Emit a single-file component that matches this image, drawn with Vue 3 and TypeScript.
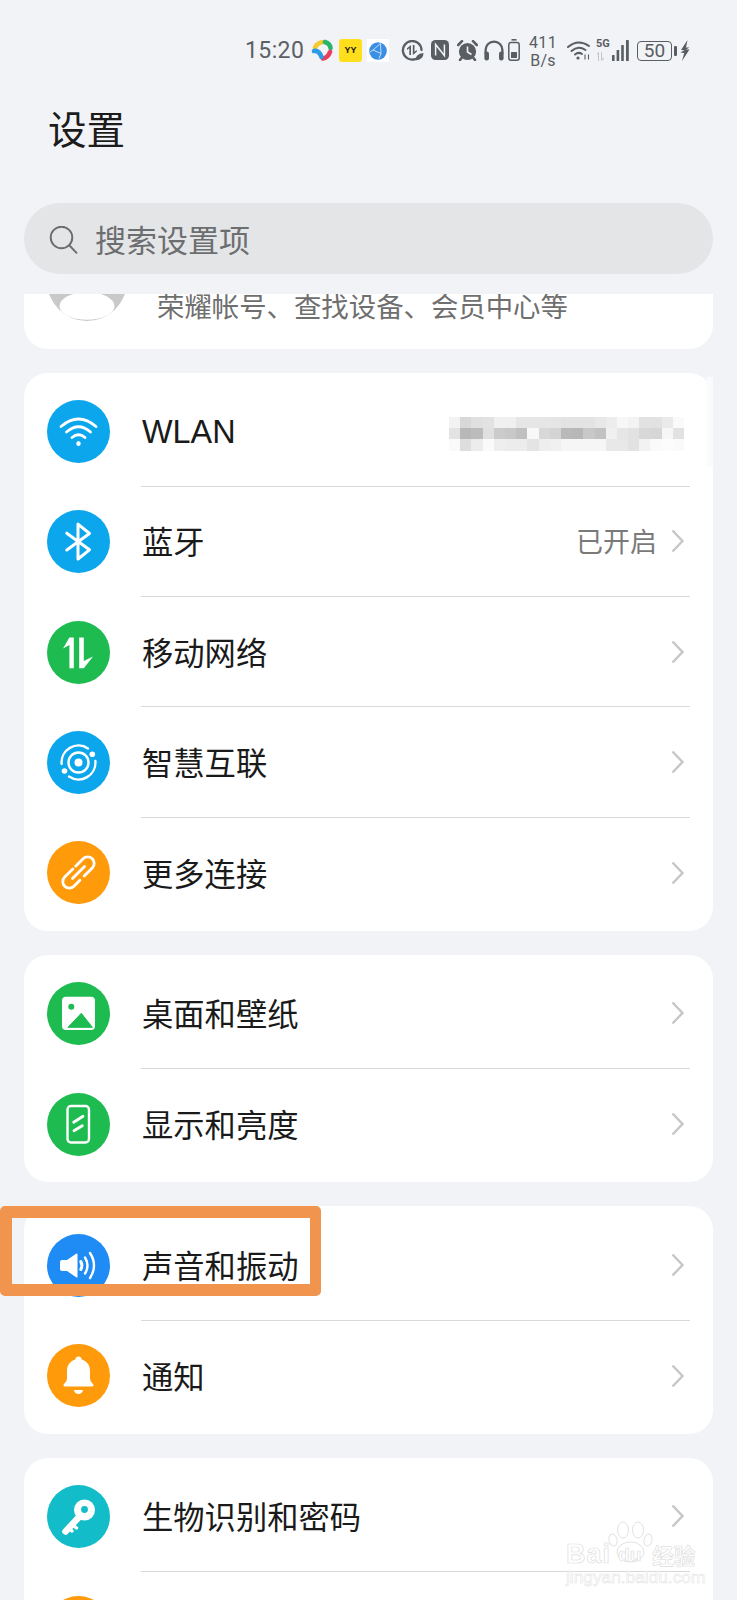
<script setup lang="ts">
interface Row {
  id: string
  label: string
  color: string
  value?: string
  latin?: boolean
  blur?: boolean
}

const groups: Row[][] = [
  [
    { id: 'wifi', label: 'WLAN', color: '#0ca6ec', latin: true, blur: true },
    { id: 'bt', label: '蓝牙', color: '#0ca6ec', value: '已开启' },
    { id: 'data', label: '移动网络', color: '#1dbb50' },
    { id: 'hi', label: '智慧互联', color: '#0ca6ec' },
    { id: 'link', label: '更多连接', color: '#ff9a0b' },
  ],
  [
    { id: 'image', label: '桌面和壁纸', color: '#1dbb50' },
    { id: 'display', label: '显示和亮度', color: '#1dbb50' },
  ],
  [
    { id: 'sound', label: '声音和振动', color: '#1f8cf5' },
    { id: 'bell', label: '通知', color: '#ff9a0b' },
  ],
  [
    { id: 'key', label: '生物识别和密码', color: '#12bcc8' },
    { id: 'more', label: '', color: '#ff9a0b' },
  ],
]

const blurCells: string[] = [
  'f2', 'd8', 'e0', 'e2', 'f0', 'f0', 'e6', 'e6', 'e6', 'e5', 'e3', 'e3', 'e3', 'e8', 'ed', 'f7', 'f3', 'e2', 'e2', 'ea', 'fa',
  'e3', 'b8', 'bc', 'e0', 'cb', 'c8', 'c0', 'f8', 'd8', 'd4', 'b9', 'b7', 'c8', 'c2', 'f0', 'e6', 'e2', 'd8', 'd6', 'f6', 'e2',
  'fa', 'de', 'ec', 'fa', 'ee', 'ec', 'ec', 'e4', 'ee', 'f0', 'f6', 'f6', 'f6', 'f6', 'e8', 'e8', 'e2', 'f2', 'fa', 'fc', 'fa',
].map((g) => `#${g}${g}${g}`)
</script>

<template>
  <div class="page">
    <div class="status">
      <span class="time">15:20</span>
      <svg class="s-app1" width="22" height="22" viewBox="0 0 22 22" fill="none" stroke-width="4.6" stroke-linecap="round">
        <path d="M4 8.5 Q7 3 13 3" stroke="#f6c92c" />
        <path d="M14 3 Q19 4.5 19.5 9" stroke="#27b56e" />
        <path d="M19 13 Q17 18.5 12 19.5" stroke="#ea3f5c" />
        <path d="M3 12 Q8 11 10.5 18" stroke="#2f9be8" />
      </svg>
      <span class="s-yy">YY</span>
      <span class="s-ball">
        <svg width="20" height="20" viewBox="0 0 20 20">
          <circle cx="10" cy="10" r="8.8" fill="#3a8ee4" />
          <path d="M12.5 2.5 L5 9 L13 12.5 L12.5 2.5 M13 12.5 L11 17.5 M5 9 L2 11" stroke="#d6e8fa" stroke-width="0.9" fill="none" />
        </svg>
      </span>
      <svg class="s-saver" width="23" height="21" viewBox="0 0 23 21" fill="none">
        <path d="M14 19.2 A9.3 9.3 0 1 1 20.5 10" stroke="#595e63" stroke-width="2.3" stroke-linecap="round" />
        <path d="M10 5 V15 H8.3 V8.3 L6 10 V8.2 Z M11.8 5 H13.5 V11.7 L15.8 10 V11.8 L11.8 15 Z" fill="#595e63" />
        <path d="M14.5 20.5 Q14 14 22.5 13 Q22.5 20 14.5 20.5 Z" fill="#595e63" />
      </svg>
      <svg class="s-nfc" width="18" height="20" viewBox="0 0 18 20">
        <rect x="0" y="0" width="18" height="20" rx="4.5" fill="#595e63" />
        <path d="M4.6 15.5 V4.5 L13.4 15.5 V4.5" fill="none" stroke="#f1f3f6" stroke-width="1.5" />
      </svg>
      <svg class="s-alarm" width="21" height="21" viewBox="0 0 21 21">
        <circle cx="10.5" cy="11.5" r="8.6" fill="#595e63" />
        <path d="M1.2 5 L5 1.2 M19.8 5 L16 1.2 M4.5 18 L3 20 M16.5 18 L18 20" stroke="#595e63" stroke-width="2.6" stroke-linecap="round" />
        <path d="M10.5 6.5 V12 L14.5 14.5" fill="none" stroke="#f1f3f6" stroke-width="1.6" />
      </svg>
      <svg class="s-head" width="20" height="21" viewBox="0 0 20 21" fill="none">
        <path d="M1.6 14 V10 a8.4 8.4 0 0 1 16.8 0 V14" stroke="#595e63" stroke-width="2.3" />
        <rect x="0.4" y="11.5" width="4.6" height="9" rx="2.2" fill="#595e63" />
        <rect x="15" y="11.5" width="4.6" height="9" rx="2.2" fill="#595e63" />
      </svg>
      <svg class="s-batt" width="12" height="22" viewBox="0 0 12 22" fill="none">
        <rect x="3.5" y="0" width="5" height="1.6" fill="#595e63" />
        <rect x="0.8" y="3.5" width="10.4" height="17.7" rx="2.2" stroke="#595e63" stroke-width="1.5" />
        <rect x="3" y="13" width="6" height="6" rx="0.6" fill="#595e63" />
      </svg>
      <div class="s-speed"><span>411</span><span>B/s</span></div>
      <svg class="s-wifi" width="24" height="20" viewBox="0 0 24 20" fill="none" stroke="#595e63" stroke-width="2" stroke-linecap="round">
        <path d="M1 7 Q11 -1.5 22 6" />
        <path d="M4.5 11 Q11 5 18.5 10" />
        <path d="M8 14.5 Q11.5 11.5 15 14" />
        <circle cx="11" cy="18" r="1.6" fill="#595e63" stroke="none" />
        <path d="M18 14.5 V19.5 M21.5 14.5 V19.5" stroke-width="1.1" stroke-linecap="butt" />
      </svg>
      <div class="s-sim">
        <span class="s-5g">5G</span>
        <svg width="11" height="9" viewBox="0 0 11 9" fill="#c3c6c9">
          <path d="M1 1.5 L3 0 V9 H2 V2 L1 3 Z M5 0 H6 V7 L8 5.5 V7 L5 9 Z" />
        </svg>
      </div>
      <svg class="s-bars" width="17" height="21" viewBox="0 0 17 21" fill="#595e63">
        <rect x="0" y="15" width="2.6" height="6" rx="0.6" />
        <rect x="4.6" y="10" width="2.6" height="11" rx="0.6" />
        <rect x="9.2" y="5" width="2.6" height="16" rx="0.6" />
        <rect x="14" y="0" width="2.8" height="21" rx="0.6" />
      </svg>
      <div class="s-battery">
        <div class="s-battery-body">50</div>
        <div class="s-battery-cap"></div>
      </div>
      <svg class="s-bolt" width="10" height="21" viewBox="0 0 10 21" fill="#595e63">
        <path d="M7.5 0 L1 10 H4.5 L0.5 12.5 L4.2 13 L2 21 L9.5 9.5 H6 L9.5 7.5 H6 Z" />
      </svg>
    </div>

    <h1 class="title">设置</h1>

    <div class="search">
      <svg class="search-icon" width="29" height="28" viewBox="0 0 29 28" fill="none" stroke="#6a6d70" stroke-width="1.9" stroke-linecap="round">
        <circle cx="12.5" cy="11.5" r="10.8" />
        <path d="M20.5 19.5 L27.5 26.8" />
      </svg>
      <span class="search-text">搜索设置项</span>
    </div>

    <div class="list">
      <section class="card profile">
        <svg class="avatar" width="80" height="80" viewBox="0 0 80 80">
          <circle cx="40" cy="40" r="40" fill="#c9c9c9" />
          <ellipse cx="40" cy="65" rx="27.5" ry="13.8" fill="#fff" />
        </svg>
        <span class="profile-text">荣耀帐号、查找设备、会员中心等</span>
      </section>

      <section v-for="(group, gi) in groups" :key="gi" class="card">
        <div v-for="(row, ri) in group" :key="row.id" class="row">
          <span v-if="row.id === 'wifi'" class="smudge"></span>
          <svg class="icon" width="63" height="63" viewBox="0 0 63 63" fill="none">
            <circle cx="31.5" cy="31.5" r="31.5" :fill="row.color" />
            <g v-if="row.id === 'wifi'" stroke="#fff" stroke-width="2.8" stroke-linecap="round">
              <path d="M14 26.5 Q31.5 11.5 49 26.5" />
              <path d="M19.5 32 Q31.5 21.5 43.5 32" />
              <path d="M25 37.5 Q31.5 32 38 37.5" />
              <ellipse cx="31.5" cy="43.5" rx="2.2" ry="2.6" fill="#fff" stroke="none" />
            </g>
            <path v-else-if="row.id === 'bt'" d="M19.8 40 L42.5 23.5 L31 14.2 V49 L42.5 39.8 L19.8 23.2" stroke="#fff" stroke-width="3" stroke-linejoin="round" stroke-linecap="round" />
            <g v-else-if="row.id === 'data'" fill="#fff">
              <path d="M22.4 16.5 H26.8 V47.3 H22.4 V24 L16 27.5 Z" />
              <path d="M32.2 16.5 H36.8 V40 L46 35.5 L36.8 47.3 H32.2 Z" />
            </g>
            <g v-else-if="row.id === 'hi'">
              <circle cx="31.5" cy="31.5" r="4" fill="#fff" />
              <circle cx="31.5" cy="31.5" r="10" stroke="#fff" stroke-width="2.4" />
              <path d="M14.6 33 A17 17 0 0 1 41 17.4 M48.4 30 A17 17 0 0 1 22 45.6" stroke="#fff" stroke-width="2.4" stroke-linecap="round" />
              <circle cx="45.3" cy="23.2" r="2.8" fill="#fff" />
              <circle cx="17.5" cy="40" r="2.8" fill="#fff" />
            </g>
            <g v-else-if="row.id === 'link'" transform="rotate(-45 31.5 31.5)" stroke="#fff" stroke-width="2.8" stroke-linecap="round">
              <path d="M30 25 H18.5 a6.5 6.5 0 0 0 0 13 H27" />
              <path d="M34 25 H44.5 a6.5 6.5 0 0 1 0 13 H33" />
              <path d="M23 31.5 H40" />
            </g>
            <g v-else-if="row.id === 'image'">
              <rect x="15" y="14.7" width="33" height="33.3" rx="4" fill="#fff" />
              <circle cx="24.3" cy="24.7" r="3" :fill="row.color" />
              <path d="M21 45.3 L34.3 31.3 L45.3 45.3 Z" :fill="row.color" stroke="#1dbb50" stroke-width="1" stroke-linejoin="round" />
            </g>
            <g v-else-if="row.id === 'display'" stroke="#fff" stroke-linecap="round">
              <rect x="20.5" y="13" width="21.5" height="36.5" rx="3.5" stroke-width="2.4" />
              <path d="M26.7 29.3 L36 23.3 M27 37.7 L35.3 32.7" stroke-width="2.8" />
            </g>
            <g v-else-if="row.id === 'sound'" stroke="#fff" stroke-linecap="round">
              <path d="M15 26 H20 L29.5 19.5 A1 1 0 0 1 30.5 20 V43 A1 1 0 0 1 29.5 43.5 L20 37 H15 A2 2 0 0 1 13 35 V28 A2 2 0 0 1 15 26 Z" fill="#fff" stroke="none" />
              <path d="M33.8 27.5 Q36 31.5 33.8 35.5" stroke-width="3" />
              <path d="M38 23.5 Q43 31.5 38 39.5" stroke-width="2.4" />
              <path d="M43 19 Q51 31.5 43 44" stroke-width="2.4" />
            </g>
            <g v-else-if="row.id === 'bell'" fill="#fff">
              <path d="M31.5 12.5 c-2 0 -3.2 1.4 -3.2 3 c-5.5 1.6 -8.3 6 -8.3 11.5 v7 c0 3 -1.4 4.5 -3 6 c-1 1 -.5 2.6 1 2.6 h27 c1.5 0 2 -1.6 1 -2.6 c-1.6 -1.5 -3 -3 -3 -6 v-7 c0 -5.5 -2.8 -9.9 -8.3 -11.5 c0 -1.6 -1.2 -3 -3.2 -3 z" />
              <path d="M27 46 h9 a4.5 4 0 0 1 -9 0 z" />
            </g>
            <g v-else-if="row.id === 'key'">
              <circle cx="37.5" cy="25" r="10.5" fill="#fff" />
              <circle cx="37.5" cy="24.5" r="3.4" :fill="row.color" />
              <path d="M33 31 L18.5 46.5" stroke="#fff" stroke-width="6.5" stroke-linecap="round" />
              <path d="M25 39.5 L29.5 43 M21.5 43 L25 46" stroke="#fff" stroke-width="3.4" stroke-linecap="round" />
            </g>
          </svg>
          <div class="body" :class="{ 'body-last': ri === group.length - 1 }">
            <span v-if="row.label" class="label" :class="{ latin: row.latin }">{{ row.label }}</span>
            <div class="trail">
              <div v-if="row.blur" class="blur">
                <i v-for="(c, i) in blurCells" :key="i" :style="{ background: c }"></i>
              </div>
              <template v-else>
                <span v-if="row.value" class="value">{{ row.value }}</span>
                <svg class="chevron" width="14" height="24" viewBox="0 0 14 24" fill="none">
                  <path d="M1.5 1.5 L11.5 12 L1.5 22.5" stroke="#c6c6c6" stroke-width="2.4" />
                </svg>
              </template>
            </div>
          </div>
        </div>
      </section>
    </div>

    <div class="highlight"></div>

    <div class="watermark">
      <svg class="wm-paw" width="52" height="42" viewBox="0 0 52 42" fill="#fff" stroke="#e2e2e2" stroke-width="1">
        <ellipse cx="18" cy="9" rx="5.5" ry="8" />
        <ellipse cx="33" cy="9" rx="5.5" ry="8" />
        <ellipse cx="8" cy="19" rx="4" ry="6" transform="rotate(-15 8 19)" />
        <ellipse cx="43" cy="19" rx="4" ry="6" transform="rotate(15 43 19)" />
        <ellipse cx="25.5" cy="31" rx="13.5" ry="10" />
      </svg>
      <div class="wm-line">
        <span class="wm-bai">Bai</span>
        <span class="wm-du">du</span>
        <span class="wm-cn">经验</span>
      </div>
      <div class="wm-url">jingyan.baidu.com</div>
    </div>
  </div>
</template>

<style scoped>
.page {
  position: relative;
  width: 737px;
  height: 1600px;
  overflow: hidden;
  background: #f1f3f6;
  font-family: "Noto Sans CJK SC", "Noto Sans", sans-serif;
  color: #1a1a1a;
}

/* status bar */
.status {
  height: 97px;
  box-sizing: border-box;
  padding: 39px 0 0 245px;
  display: flex;
  align-items: flex-start;
  font-family: Roboto, sans-serif;
  color: #595e63;
}
.time {
  font-size: 23px;
  line-height: 24px;
  letter-spacing: 0.4px;
  color: #5b6065;
  width: 59px;
}
.s-app1 { margin: 0 0 0 7px; }
.s-yy {
  margin-left: 6px;
  width: 23px;
  height: 23px;
  border-radius: 3px;
  background: #ffdf1c;
  color: #111;
  font: 700 9px/23px "Liberation Sans", sans-serif;
  text-align: center;
}
.s-ball {
  margin-left: 5px;
  width: 22px;
  height: 23px;
  background: #fff;
  display: flex;
  align-items: center;
  justify-content: center;
}
.s-saver { margin: 1px 0 0 12px; }
.s-nfc { margin: 1px 0 0 7px; }
.s-alarm { margin: 1px 0 0 8px; }
.s-head { margin: 1px 0 0 6px; }
.s-batt { margin: 0 0 0 4px; }
.s-speed {
  margin: -5px 0 0 9px;
  width: 28px;
  display: flex;
  flex-direction: column;
  align-items: center;
  font-size: 16px;
  line-height: 18px;
  letter-spacing: 0.3px;
}
.s-wifi { margin: 1px 0 0 10px; }
.s-sim {
  margin: 0 0 0 5px;
  width: 16px;
  display: flex;
  flex-direction: column;
  gap: 3px;
}
.s-5g {
  font-size: 11px;
  line-height: 10px;
  font-weight: 700;
}
.s-bars { margin: 1px 0 0 0; }
.s-battery {
  margin: 2px 0 0 8px;
  display: flex;
  align-items: center;
  gap: 2px;
}
.s-battery-body {
  width: 35px;
  height: 20px;
  box-sizing: border-box;
  border: 1.6px solid #595e63;
  border-radius: 4px;
  font-size: 19px;
  line-height: 17px;
  text-align: center;
}
.s-battery-cap {
  width: 3.4px;
  height: 10px;
  border-radius: 1px;
  background: #595e63;
}
.s-bolt { margin: 1px 0 0 3px; }

/* header */
.title {
  margin: 0;
  padding-left: 48px;
  height: 60px;
  font-size: 38.6px;
  line-height: 60px;
  font-weight: 400;
  color: #1c1c1c;
}
.search {
  margin: 46px 24px 0;
  height: 71px;
  border-radius: 36px;
  background: #e4e5e7;
  display: flex;
  align-items: center;
  padding-left: 25px;
  gap: 17px;
}
.search-icon { margin-top: 2px; }
.search-text {
  font-size: 31px;
  line-height: 40px;
  color: #6c6e70;
}

/* list */
.list {
  margin: 20px 24px 0;
  display: flex;
  flex-direction: column;
  gap: 24px;
}
.card {
  background: #fff;
  border-radius: 24px;
  padding: 4px 0 3px;
}
.profile {
  height: 54.6px;
  box-sizing: border-box;
  padding: 0 0 0 23px;
  overflow: hidden;
  border-radius: 0 0 24px 24px;
  display: flex;
  align-items: flex-start;
  gap: 30px;
}
.avatar {
  flex: none;
  margin-top: -53px;
}
.profile-text {
  margin-top: -2px;
  font-size: 27.4px;
  line-height: 26px;
  color: #6f6f6f;
  white-space: nowrap;
}
.row {
  position: relative;
  height: 110.25px;
  display: flex;
  align-items: center;
  padding: 0 23px;
  gap: 31px;
}
.smudge {
  position: absolute;
  right: 0;
  top: 0;
  width: 6px;
  height: 90px;
  background: #fafbfc;
}
.icon { flex: none; }
.body {
  flex: 1;
  height: 100%;
  box-sizing: border-box;
  display: flex;
  align-items: center;
  justify-content: space-between;
  border-bottom: 1px solid #d9d9d9;
}
.body-last { border-bottom: none; }
.label {
  margin-left: 1px;
  font-size: 31.3px;
  line-height: 44px;
  white-space: nowrap;
}
.latin {
  font-family: "Liberation Sans", sans-serif;
  font-size: 32.4px;
  padding-top: 2px;
}
.trail {
  display: flex;
  align-items: center;
  gap: 14px;
  margin-right: 5px;
}
.value {
  font-size: 27px;
  line-height: 36px;
  color: #7a7a7a;
}
.blur {
  display: grid;
  grid-template-columns: repeat(21, 11.2px);
  grid-auto-rows: 11.3px;
  margin: 5px 1px 0 0;
  filter: blur(0.6px);
}
.blur i { display: block; }

/* annotation */
.highlight {
  position: absolute;
  left: 0;
  top: 1205.7px;
  width: 320.5px;
  height: 90.3px;
  box-sizing: border-box;
  border: 12px solid #f0944e;
  border-right-width: 11px;
  border-radius: 5px;
}

/* watermark */
.watermark {
  position: absolute;
  left: 566px;
  top: 1520px;
  width: 134px;
  height: 66px;
  font-family: "Liberation Sans", sans-serif;
  color: #fff;
}
.wm-paw {
  position: absolute;
  left: 39px;
  top: 1px;
}
.wm-line {
  position: absolute;
  left: 0;
  top: 22px;
  width: 134px;
  height: 25px;
  display: flex;
  align-items: center;
}
.wm-bai,
.wm-du,
.wm-cn {
  -webkit-text-stroke: 0.7px #e0e0e0;
  white-space: nowrap;
}
.wm-bai {
  font-size: 27px;
  line-height: 25px;
  font-weight: 700;
  letter-spacing: 1px;
}
.wm-du {
  margin-left: 7px;
  font-size: 19px;
  line-height: 25px;
  font-weight: 700;
}
.wm-cn {
  margin-left: 11px;
  font-family: "Noto Sans CJK SC", sans-serif;
  font-size: 21.5px;
  line-height: 25px;
  font-weight: 700;
}
.wm-url {
  position: absolute;
  left: 0;
  top: 48px;
  font-size: 17.3px;
  line-height: 18px;
  font-weight: 400;
  white-space: nowrap;
  -webkit-text-stroke: 0.5px #e2e2e2;
}
</style>

<style>
html, body { margin: 0; background: #f1f3f6; }
</style>
